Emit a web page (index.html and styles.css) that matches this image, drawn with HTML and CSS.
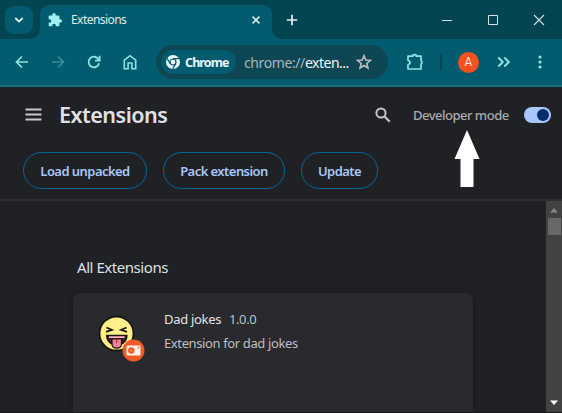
FILE: index.html
```html
<!DOCTYPE html>
<html lang="en">
<head>
<meta charset="utf-8">
<title>Extensions</title>
<link rel="stylesheet" href="styles.css">
</head>
<body>
<div class="window">
  <header class="titlebar">
    <button class="tab-search"><svg width="10" height="10" viewBox="0 0 10 10"><path d="M1.3 3 5 6.6 8.7 3" fill="none" stroke="#e6f4f5" stroke-width="1.8"/></svg></button>
    <div class="tab">
      <svg class="tab-icon" width="14" height="14" viewBox="1 1 22 22"><path fill="#9ff0ee" d="M20.5 11H19V7c0-1.100-.9-2-2-2h-4V3.500a2.500 2.500 0 0 0-5 0V5H4c-1.100 0-2 .9-2 2v3.800h1.500a2.700 2.700 0 0 1 0 5.400H2V20c0 1.100.9 2 2 2h3.800v-1.500a2.700 2.700 0 0 1 5.400 0V22H17c1.100 0 2-.9 2-2v-4h1.500a2.500 2.500 0 0 0 0-5z"/></svg>
      <span class="tab-title">Extensions</span>
      <svg class="tab-close" width="8" height="8" viewBox="0 0 8 8"><path d="M.6.6 7.400 7.400M7.400.6.6 7.400" stroke="#e2f1f2" stroke-width="1.500"/></svg>
    </div>
    <svg class="new-tab" width="12" height="12" viewBox="0 0 12 12"><path d="M6 .8v10.400M.8 6h10.400" stroke="#e6f2f3" stroke-width="1.700"/></svg>
    <div class="controls">
      <span class="control"><svg width="12" height="12" viewBox="0 0 12 12"><path d="M1 6.500h10" stroke="#d5e2e4"/></svg></span>
      <span class="control"><svg width="12" height="12" viewBox="0 0 12 12"><path d="M1.500 1.500h9v9h-9z" fill="none" stroke="#d5e2e4"/></svg></span>
      <span class="control"><svg width="12" height="12" viewBox="0 0 12 12"><path d="m1 1 10 10M11 1 1 11" stroke="#d5e2e4" stroke-width="1.100"/></svg></span>
    </div>
  </header>

  <nav class="toolbar">
    <span class="cell"><svg width="14" height="14" viewBox="0 0 14 14"><path d="M13 7H2M7 1.500 1.500 7 7 12.500" fill="none" stroke="#8fe3e1" stroke-width="1.700"/></svg></span>
    <span class="cell"><svg width="14" height="14" viewBox="0 0 14 14"><path d="M1 7h11M7 1.500 12.500 7 7 12.500" fill="none" stroke="#398d98" stroke-width="1.700"/></svg></span>
    <span class="cell"><svg width="14" height="14" viewBox="0 0 14 14"><path d="M12.100 8.200A5.300 5.300 0 1 1 11.500 4.300L12.600 5.600" fill="none" stroke="#8fe3e1" stroke-width="1.800"/><path d="M12.600.8v4.900H8" fill="none" stroke="#8fe3e1" stroke-width="1.800"/></svg></span>
    <span class="cell"><svg width="14" height="16" viewBox="0 0 14 16"><path d="M1.300 14.700V6.100L7 1.700l5.700 4.400v8.600H8.900V9H5.100v5.700z" fill="none" stroke="#8fe3e1" stroke-width="1.600"/></svg></span>
    <div class="omnibox">
      <div class="chip">
        <svg width="14" height="14" viewBox="0 0 14 14"><circle cx="7" cy="7" r="7" fill="#e9f8f8"/><circle cx="7" cy="7" r="3" fill="#e9f8f8" stroke="#025b6e" stroke-width="1.200"/><path d="M7 3.700h6.300M4.200 8.600 1 3.200M9.800 8.600 6.800 13.900" stroke="#025b6e" stroke-width="1.200"/></svg>
        <span class="chip-text">Chrome</span>
      </div>
      <span class="url"><span class="scheme">chrome://</span><span class="host">exten...</span></span>
      <svg class="star" width="16" height="16" viewBox="0 0 16 16"><path d="m8 1.800 1.750 4.250 4.600.4-3.500 3L11.900 14 8 11.600 4.100 14l1.050-4.550-3.500-3 4.600-.4z" fill="none" stroke="#b5b9bf" stroke-width="1.700"/></svg>
    </div>
    <span class="cell puzzle"><svg width="18" height="18" viewBox="0 0 18 18"><path d="M2 3.200h4.700a1.800 1.500 0 0 1 3.600 0H15v4.300a1.500 1.900 0 0 1 0 3.500v5H2v-4.300c2.700-.4 2.700-3.800 0-4.200z" fill="none" stroke="#8fe3e1" stroke-width="1.700" stroke-linejoin="round"/></svg></span>
    <span class="separator"></span>
    <span class="avatar">A</span>
    <span class="cell more"><svg width="14" height="12" viewBox="0 0 14 12"><path d="m1.300 1.500 4.500 4.500-4.500 4.500M7.300 1.500l4.500 4.500-4.500 4.500" fill="none" stroke="#8fe3e1" stroke-width="1.900"/></svg></span>
    <span class="cell"><svg width="4" height="16" viewBox="0 0 4 16"><g fill="#8fe3e1"><circle cx="2" cy="3" r="1.600"/><circle cx="2" cy="8" r="1.600"/><circle cx="2" cy="13" r="1.600"/></g></svg></span>
  </nav>

  <section class="page-head">
    <div class="heading-row">
      <svg class="menu" width="17" height="13" viewBox="0 0 17 13"><path d="M.5 1.500h16M.5 6.500h16M.5 11.500h16" stroke="#c9cacc" stroke-width="1.800"/></svg>
      <h1>Extensions</h1>
      <svg class="search" width="16" height="16" viewBox="0 0 16 16"><circle cx="6" cy="6" r="4.600" fill="none" stroke="#c3c4c6" stroke-width="2"/><path d="m9.300 9.300 5.500 5.500" stroke="#c3c4c6" stroke-width="2.200"/></svg>
      <span class="dev-label">Developer mode</span>
      <span class="toggle"><span class="knob"></span></span>
    </div>
    <div class="actions">
      <button class="action load"><span>Load unpacked</span></button>
      <button class="action pack"><span>Pack extension</span></button>
      <button class="action update"><span>Update</span></button>
    </div>
    <svg class="pointer" width="26" height="57" viewBox="0 0 26 57"><path d="M13 0 25.500 29H19.500V57H6.500V29H.5z" fill="#fff"/></svg>
  </section>

  <main class="body">
    <div class="content">
      <h2>All Extensions</h2>
      <article class="card">
        <svg class="ext-icon" width="50" height="50" viewBox="0 0 50 50">
          <circle cx="18.500" cy="18.500" r="17" fill="#fff08a" stroke="#191713" stroke-width="1.800"/>
          <path d="m8.500 12.500 5.500 2.400-6 2M28.500 12.500 23 14.900l6 2" fill="none" stroke="#191713" stroke-width="1.700"/>
          <path d="M8.800 20.500h20c0 5.500-4 9.500-10 9.500s-10-4-10-9.500z" fill="#461b27" stroke="#191713" stroke-width="1.500"/>
          <path d="M11 21.300h15.600v1.700H11z" fill="#ffb9c4"/>
          <path d="M14 24h9.500v5c0 5.500-9.500 5.500-9.500 0z" fill="#f2809a" stroke="#191713" stroke-width="1.200"/>
          <path d="M18.700 24v4" stroke="#a33853" stroke-width="1.200"/>
          <circle cx="35.500" cy="35.500" r="11" fill="#f15a29"/>
          <rect x="28.500" y="30.500" width="14" height="10" rx="1.200" fill="#fff3e9"/>
          <circle cx="33.300" cy="35.500" r="3.200" fill="#f15a29"/><circle cx="33.300" cy="35.500" r="1.100" fill="#f8a07c"/>
          <circle cx="40.500" cy="32.700" r=".9" fill="#f15a29"/>
        </svg>
        <div class="details">
          <div class="name-row"><span class="name">Dad jokes</span><span class="version">1.0.0</span></div>
          <p class="description">Extension for dad jokes</p>
        </div>
      </article>
    </div>
    <aside class="scrollbar">
      <svg width="8" height="5" viewBox="0 0 8 5"><path d="M4 0 8 4.500H0z" fill="#858585"/></svg>
      <span class="thumb"></span>
      <svg class="down" width="8" height="5" viewBox="0 0 8 5"><path d="M0 .5h8L4 5z" fill="#fff"/></svg>
    </aside>
  </main>
</div>
</body>
</html>
```

FILE: styles.css
```css
* { box-sizing: border-box; }
body { margin: 0; background: #202124; font-family: "Noto Sans", "Open Sans", sans-serif; }
button { font: inherit; padding: 0; border: 0; background: none; }
svg { display: block; flex: none; }
h1, h2, p { margin: 0; }
.window { width: 562px; height: 413px; display: flex; flex-direction: column; overflow: hidden; white-space: nowrap; border-bottom: 1px solid #19161c; }

.titlebar { height: 39px; flex: none; display: flex; align-items: center; background: #024450; }
.tab-search { width: 28px; height: 28px; margin-left: 5px; border-radius: 9px; background: #025b6e; display: flex; align-items: center; justify-content: center; }
.tab { position: relative; align-self: flex-end; width: 232px; height: 34px; margin-left: 7px; padding: 0 12px 5px 8px; border-radius: 9px 9px 0 0; background: #025b6e; display: flex; align-items: center; }
.tab::before, .tab::after { content: ""; position: absolute; bottom: 0; width: 10px; height: 10px; }
.tab::before { right: 100%; background: radial-gradient(circle at 0 0, transparent 9.500px, #025b6e 10.200px); }
.tab::after { left: 100%; background: radial-gradient(circle at 100% 0, transparent 9.500px, #025b6e 10.200px); }
.tab-title { margin-left: 9px; font-size: 12px; letter-spacing: -0.55px; color: #dcebed; }
.tab-close { margin-left: auto; }
.new-tab { margin-left: 14px; }
.controls { margin-left: auto; display: flex; }
.control { width: 46px; display: flex; justify-content: center; }

.toolbar { height: 48px; flex: none; display: flex; align-items: center; padding: 0 4px; background: #025b6e; border-bottom: 2px solid #12707f; }
.cell { width: 36px; display: flex; justify-content: center; }
.omnibox { width: 232px; height: 34px; margin-left: 8px; padding: 0 16px 0 5px; border-radius: 17px; background: #0e4753; display: flex; align-items: center; }
.chip { width: 75px; height: 24px; padding-left: 5px; border-radius: 12px; background: #025b6e; display: flex; align-items: center; gap: 5px; }
.chip-text { font-size: 12.500px; font-weight: 700; letter-spacing: -0.9px; color: #e9f5f6; }
.url { margin-left: 8px; font-size: 14px; }
.scheme { color: #a5b8be; letter-spacing: -0.4px; }
.host { color: #eef4f5; letter-spacing: -0.5px; }
.star { margin-left: auto; }
.puzzle { margin-left: 9px; }
.separator { width: 2px; height: 16px; margin-left: 7px; background: #024656; }
.avatar { width: 21px; height: 21px; margin-left: 16px; border-radius: 50%; background: #f4511e; color: #ffe3d8; font: 12px/21px Roboto, sans-serif; text-align: center; }
.more { margin-left: 7px; }

.page-head { position: relative; height: 114px; flex: none; padding-top: 12px; border-bottom: 2px solid #2e2f33; }
.heading-row { height: 32px; display: flex; align-items: center; padding: 0 11px 0 25px; }
.menu { margin-top: -1px; }
h1 { width: 108px; margin-left: 17px; font-size: 21.500px; line-height: 30px; font-weight: 600; letter-spacing: -0.5px; color: #e0e1e4; }
.search { margin: -1px 0 0 208px; }
.dev-label { width: 96px; margin-left: 22px; font-size: 13px; font-weight: 500; letter-spacing: -0.5px; color: #a9aaad; }
.toggle { width: 27px; height: 16px; margin: -1px 0 0 auto; padding: 2px; border-radius: 8px; background: #a8c7fa; display: flex; justify-content: flex-end; }
.knob { width: 12px; height: 12px; border-radius: 50%; background: #062e6f; }
.actions { display: flex; gap: 16px; margin: 21px 0 0 23px; }
.action { height: 37px; border: 1px solid #04689a; border-radius: 19px; color: #a8c7fa; font-size: 13px; font-weight: 600; letter-spacing: -0.55px; display: flex; align-items: center; justify-content: center; }
.load { width: 124px; }
.pack { width: 122px; }
.update { width: 77px; }
.pointer { position: absolute; left: 454px; top: 43px; }

.body { flex: 1; min-height: 0; display: flex; }
.content { flex: 1; display: flex; flex-direction: column; padding: 55px 73px 0 73px; }
h2 { margin-left: 4px; font-size: 15px; line-height: 22px; font-weight: 400; letter-spacing: -0.45px; color: #dfe0e3; }
.card { flex: 1; width: 400px; margin-top: 15px; padding: 22px 0 0 25px; border-radius: 8px 8px 0 0; background: #292a2d; box-shadow: 0 0 4px rgba(0,0,0,.35); display: flex; }
.details { margin: -6px 0 0 16px; font-size: 13px; line-height: 20px; }
.name-row { display: flex; }
.name { width: 65px; color: #e3e3e6; letter-spacing: -0.3px; }
.version { color: #bdc1c5; letter-spacing: -0.4px; }
.description { margin-top: 4px; color: #bdbfc2; letter-spacing: -0.38px; }
.scrollbar { width: 16px; padding: 7px 0; background: #424242; display: flex; flex-direction: column; align-items: center; }
.thumb { width: 13px; height: 17px; margin-top: 5px; background: #686868; }
.down { margin-top: auto; }
```
